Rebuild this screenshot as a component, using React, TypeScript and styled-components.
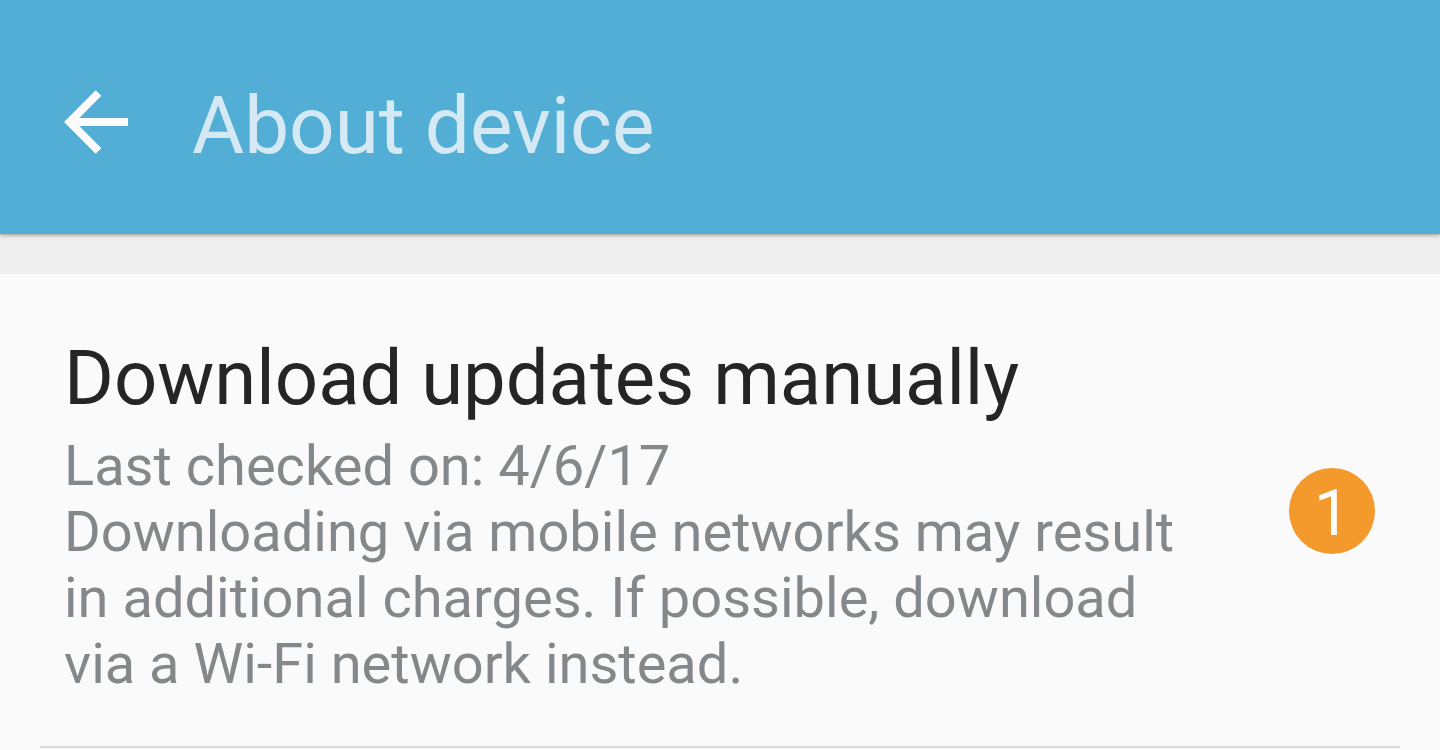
import React from "react";
import styled, { createGlobalStyle } from "styled-components";

const GlobalStyle = createGlobalStyle`
  * { box-sizing: border-box; }
  body {
    margin: 0;
    background: #fafafa;
    font-family: Roboto, "Liberation Sans", sans-serif;
  }
`;

const Screen = styled.div`
  display: flex;
  flex-direction: column;
`;

const AppBar = styled.header`
  display: flex;
  align-items: center;
  gap: 64px;
  min-height: 234px;
  padding: 10px 64px 0;
  background: #53aed5;
  box-shadow: 0 1px 4px rgba(0, 0, 0, 0.4);
  z-index: 1;
`;

const BackButton = styled.button`
  display: flex;
  padding: 0;
  border: 0;
  background: none;
  color: #fcfcfc;
  cursor: pointer;
`;

const Title = styled.h1`
  margin: 0;
  padding-top: 8px;
  font-size: 80px;
  line-height: 96px;
  font-weight: 400;
  color: #d4e9f3;
`;

const SectionGap = styled.div`
  height: 40px;
  background: #efefef;
`;

const List = styled.ul`
  margin: 0;
  padding: 0 40px;
  list-style: none;
`;

const Item = styled.li`
  border-bottom: 2px solid #d9d9d9;
`;

const ItemButton = styled.button`
  display: flex;
  align-items: center;
  justify-content: space-between;
  gap: 80px;
  width: 100%;
  padding: 2px 25px 0 24px;
  border: 0;
  background: none;
  font-family: inherit;
  text-align: left;
  cursor: pointer;
`;

const ItemText = styled.span`
  display: flex;
  flex-direction: column;
  gap: 7px;
  max-width: 1120px;
  padding: 54px 0 49px;
`;

const ItemTitle = styled.span`
  font-size: 76px;
  line-height: 96px;
  color: #252525;
`;

const ItemDetails = styled.span`
  display: flex;
  flex-direction: column;
  font-size: 56px;
  line-height: 66px;
  color: #84888b;
`;

const Badge = styled.span`
  display: flex;
  flex: none;
  align-items: center;
  justify-content: center;
  width: 86px;
  height: 86px;
  padding-top: 6px;
  border-radius: 50%;
  background: #f4992c;
  color: #fff;
  font-size: 64px;
  line-height: 80px;
`;

export default function App() {
  return (
    <Screen>
      <GlobalStyle />
      <AppBar>
        <BackButton aria-label="Back">
          <svg width="64" height="64" viewBox="0 0 64 64" fill="none" stroke="currentColor" strokeWidth="8">
            <path d="M64 32H10M34.5 3L5.7 32L34.5 61" />
          </svg>
        </BackButton>
        <Title>About device</Title>
      </AppBar>
      <main>
        <SectionGap />
        <List>
          <Item>
            <ItemButton>
              <ItemText>
                <ItemTitle>Download updates manually</ItemTitle>
                <ItemDetails>
                  <span>Last checked on: 4/6/17</span>
                  <span>
                    Downloading via mobile networks may result in additional
                    charges. If possible, download via a Wi-Fi network instead.
                  </span>
                </ItemDetails>
              </ItemText>
              <Badge>1</Badge>
            </ItemButton>
          </Item>
        </List>
      </main>
    </Screen>
  );
}
